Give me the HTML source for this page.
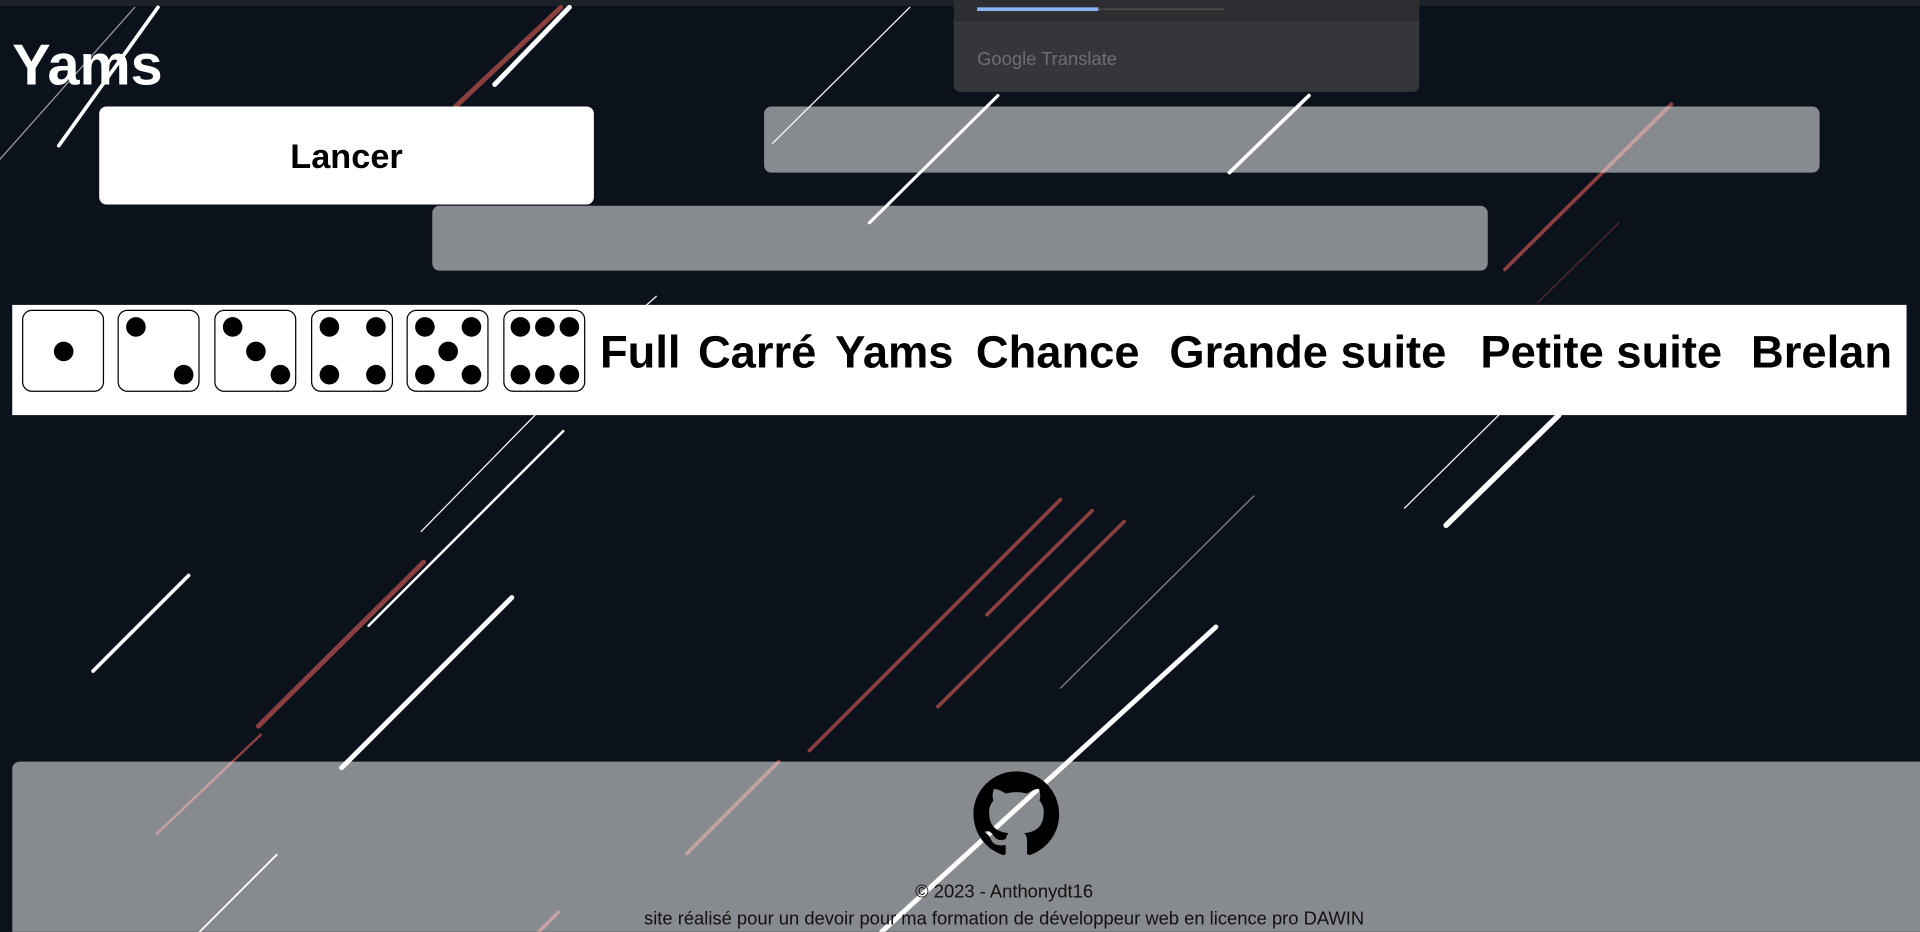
<!DOCTYPE html>
<html><head><meta charset="utf-8">
<style>
html,body{margin:0;padding:0;width:1920px;height:932px;overflow:hidden;background:#0b121b;}
#w{position:absolute;left:0;top:0;width:1568px;height:761px;transform:scale(1.22449);transform-origin:0 0;font-family:"Liberation Sans",Arial,sans-serif;}
.a{position:absolute;}
.gray{background:rgba(255,255,255,0.51);border-radius:6px;}
.die{position:absolute;top:253px;width:65px;height:65px;border:1px solid #000;border-radius:8px;background:#fff;}
.p{position:absolute;width:16px;height:16px;border-radius:50%;background:#000;}
.lab{position:absolute;top:267px;font-weight:bold;font-size:37px;color:#000;white-space:nowrap;}
</style></head><body><div id="w">
<div class="a" style="left:0;top:0;width:1568px;height:5px;background:#1c2027"></div>
<svg class="a" style="left:0;top:0" width="1568" height="761" stroke-linecap="round">
<g stroke="#fff">
<line x1="465" y1="6" x2="404" y2="69" stroke-width="4"/>
<line x1="129" y1="6" x2="48" y2="119" stroke-width="3"/>
<line x1="110" y1="6" x2="0" y2="130" stroke-width="1" stroke-opacity=".6"/>
<line x1="743" y1="6" x2="631" y2="117" stroke-width="1"/>
<line x1="815" y1="78" x2="710" y2="182" stroke-width="2.5"/>
<line x1="1069" y1="78" x2="1004" y2="141" stroke-width="3"/>
<line x1="536" y1="242" x2="527" y2="250" stroke-width="1"/>
<line x1="1273" y1="339" x2="1181" y2="429" stroke-width="4.5"/>
<line x1="1224" y1="339" x2="1147" y2="415" stroke-width="1"/>
<line x1="437" y1="339" x2="344" y2="434" stroke-width="1"/>
<line x1="460" y1="352" x2="301" y2="511" stroke-width="2"/>
<line x1="154" y1="470" x2="76" y2="548" stroke-width="3"/>
<line x1="418" y1="488" x2="279" y2="627" stroke-width="4"/>
<line x1="993" y1="512" x2="720" y2="761" stroke-width="4"/>
<line x1="226" y1="698" x2="163" y2="761" stroke-width="1.5"/>
<line x1="1024" y1="405" x2="866" y2="562" stroke-width="1" stroke="#888"/>
</g>
<g stroke="#8b4040">
<line x1="458" y1="6" x2="372" y2="87" stroke-width="4"/>
<line x1="1365" y1="85" x2="1229" y2="220" stroke-width="3"/>
<line x1="1322" y1="182" x2="1256" y2="247" stroke-width="1" stroke-opacity=".6"/>
<line x1="346" y1="459" x2="211" y2="593" stroke-width="4"/>
<line x1="866" y1="408" x2="661" y2="613" stroke-width="3"/>
<line x1="892" y1="417" x2="806" y2="502" stroke-width="3"/>
<line x1="918" y1="426" x2="766" y2="577" stroke-width="3"/>
<line x1="213" y1="600" x2="128" y2="681" stroke-width="2"/>
<line x1="636" y1="622" x2="561" y2="697" stroke-width="3"/>
<line x1="456" y1="745" x2="440" y2="761" stroke-width="3"/>
</g>
</svg>
<div class="a" style="left:10px;top:25px;color:#fff;font-weight:bold;font-size:47px;">Yams</div>
<div class="a" style="left:81px;top:87px;width:404px;height:80px;background:#fff;border-radius:6px;text-align:center;line-height:82px;font-weight:bold;font-size:28px;color:#000;">Lancer</div>
<div class="a gray" style="left:624px;top:87px;width:862px;height:54px;"></div>
<div class="a gray" style="left:353px;top:168px;width:862px;height:53px;"></div>
<div class="a" style="left:779px;top:0;width:380px;height:75px;background:#35363a;border-radius:0 0 5px 5px;">
<div class="a" style="left:0;top:0;width:380px;height:18px;background:#2d2e31;border-bottom:1px solid #3c3d40"></div>
<div class="a" style="left:19px;top:7px;width:202px;height:1px;background:#555"></div>
<div class="a" style="left:19px;top:6px;width:99px;height:3px;background:#8ab4f8"></div>
<div class="a" style="left:19px;top:40px;color:#6d6e71;font-size:15px;">Google Translate</div>
</div>
<div class="a" style="left:10px;top:249px;width:1547px;height:90px;background:#fff;"></div>
<div class="die" style="left:18px"><div class="p" style="left:25px;top:25px"></div></div>
<div class="die" style="left:96px"><div class="p" style="left:6px;top:5px"></div><div class="p" style="left:45px;top:44px"></div></div>
<div class="die" style="left:175px"><div class="p" style="left:6px;top:5px"></div><div class="p" style="left:25px;top:25px"></div><div class="p" style="left:45px;top:44px"></div></div>
<div class="die" style="left:254px"><div class="p" style="left:6px;top:5px"></div><div class="p" style="left:44px;top:5px"></div><div class="p" style="left:6px;top:44px"></div><div class="p" style="left:44px;top:44px"></div></div>
<div class="die" style="left:332px"><div class="p" style="left:6px;top:5px"></div><div class="p" style="left:44px;top:5px"></div><div class="p" style="left:25px;top:25px"></div><div class="p" style="left:6px;top:44px"></div><div class="p" style="left:44px;top:44px"></div></div>
<div class="die" style="left:411px"><div class="p" style="left:5px;top:5px"></div><div class="p" style="left:25px;top:5px"></div><div class="p" style="left:45px;top:5px"></div><div class="p" style="left:5px;top:44px"></div><div class="p" style="left:25px;top:44px"></div><div class="p" style="left:45px;top:44px"></div></div>
<div class="lab" style="left:490px">Full</div>
<div class="lab" style="left:570px">Carré</div>
<div class="lab" style="left:682px">Yams</div>
<div class="lab" style="left:797px">Chance</div>
<div class="lab" style="left:955px">Grande suite</div>
<div class="lab" style="left:1209px">Petite suite</div>
<div class="lab" style="left:1430px">Brelan</div>
<div class="a" style="left:10px;top:622px;width:1558px;height:139px;background:rgba(255,255,255,0.51);border-radius:6px 0 0 0;"></div>
<svg class="a" style="left:795px;top:630px" width="70" height="70" viewBox="0 0 16 16"><path fill="#000" d="M8 0C3.58 0 0 3.58 0 8c0 3.54 2.29 6.53 5.47 7.590.4.07.55-.17.55-.38 0-.19-.01-.82-.01-1.49-2.01.37-2.530-.49-2.690-.94-.09-.23-.48-.94-.82-1.13-.28-.15-.68-.52-.01-.53.63-.01 1.08.58 1.23.82.72 1.21 1.87.87 2.33.66.07-.52.28-.87.51-1.07-1.780-.2-3.64-.89-3.64-3.95 0-.87.31-1.59.82-2.15-.08-.2-.36-1.02.08-2.12 0 0 .67-.21 2.2.82.64-.18 1.32-.27 2-.27.68 0 1.36.09 2 .27 1.53-1.04 2.2-.82 2.2-.82.44 1.1.16 1.92.08 2.12.51.56.82 1.28.82 2.15 0 3.07-1.87 3.75-3.65 3.95.29.25.54.73.54 1.48 0 1.07-.01 1.93-.01 2.2 0 .21.15.46.55.38A8.013 8.013 0 0016 8c0-4.42-3.58-8-8-8z"/></svg>
<div class="a" style="left:0;top:720px;width:1640px;text-align:center;font-size:15px;color:#111;">© 2023 - Anthonydt16</div>
<div class="a" style="left:0;top:742px;width:1640px;text-align:center;font-size:15px;color:#111;">site réalisé pour un devoir pour ma formation de développeur web en licence pro DAWIN</div>
</div></body></html>
